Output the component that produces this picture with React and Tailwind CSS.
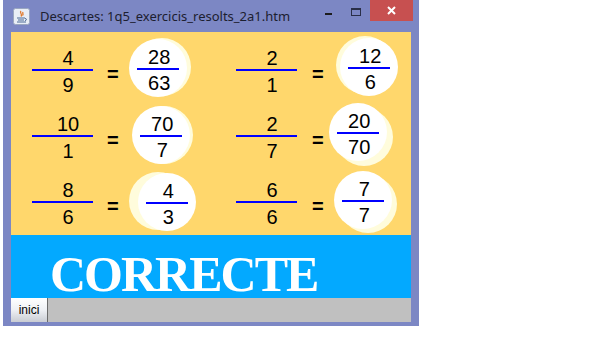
import React from 'react';

const rows = [
  [
    {
      num: '4', den: '9', a: '28', b: '63',
      frac: 'ml-[21px]', eq: 'ml-[14px]',
      circle: 'ml-[10px] mb-[6px] shadow-[4px_-1px_0_0_#fffcdc]',
    },
    {
      num: '2', den: '1', a: '12', b: '6',
      frac: 'ml-[25px]', eq: 'ml-[15px]',
      circle: 'ml-[16px] mb-[8px] shadow-[-4px_-2px_0_0_#fffcdc]',
    },
  ],
  [
    {
      num: '10', den: '1', a: '70', b: '7',
      frac: 'ml-[21px]', eq: 'ml-[14px]',
      circle: 'ml-[13px] mb-[4px] shadow-[3px_0_0_0_#fffcdc]',
    },
    {
      num: '2', den: '7', a: '20', b: '70',
      frac: 'ml-[25px]', eq: 'ml-[15px]',
      circle: 'ml-[5px] mb-[10px] shadow-[6px_5px_0_0_#fffcdc]',
    },
  ],
  [
    {
      num: '8', den: '6', a: '4', b: '3',
      frac: 'ml-[21px]', eq: 'ml-[14px]',
      circle: 'ml-[19px] mb-[2px] shadow-[-9px_-1px_0_0_#fffcdc]',
    },
    {
      num: '6', den: '6', a: '7', b: '7',
      frac: 'ml-[25px]', eq: 'ml-[15px]',
      circle: 'ml-[10px] mb-[6px] shadow-[5px_4px_0_0_#fffcdc]',
    },
  ],
];

const num = "font-['Liberation_Sans',Arial,sans-serif] text-[20px] leading-[22px] text-black";

function Fraction({ top, bottom, className }) {
  return (
    <div className={`flex flex-col w-[61px] ${className}`}>
      <div className={`${num} h-[22px] text-center pl-[11px]`}>{top}</div>
      <div className="h-[2px] bg-[#0000ff]" />
      <div className={`${num} h-[22px] mt-[3px] text-center pl-[11px]`}>{bottom}</div>
    </div>
  );
}

function Cell({ c }) {
  return (
    <div className="flex items-center w-[200px] h-[66px]">
      <Fraction top={c.num} bottom={c.den} className={c.frac} />
      <div className={`${num} font-bold mt-[6px] ${c.eq}`}>=</div>
      <div
        className={`w-[58px] h-[58px] shrink-0 rounded-full bg-white flex flex-col items-center justify-center ${c.circle}`}
      >
        <div className="flex flex-col w-[42px] mt-[3px]">
          <div className={`${num} h-[22px] text-center pl-[3px]`}>{c.a}</div>
          <div className="h-[2px] bg-[#0000ff]" />
          <div className={`${num} h-[22px] mt-[2px] text-center pl-[3px]`}>{c.b}</div>
        </div>
      </div>
    </div>
  );
}

function JavaIcon() {
  return (
    <svg width="17" height="17" viewBox="0 0 17 17">
      <rect x="0.5" y="0.5" width="16" height="16" rx="2" fill="#e9eef6" stroke="#9aa6c0" />
      <path d="M8 3 C6 5 10 6 8 8.5 M10 4 C9 5.5 11 6 9.5 7.5" stroke="#e0782a" strokeWidth="1.3" fill="none" />
      <path d="M4 10 H12 M5 12 H11 M4 14 H13" stroke="#4d6a96" strokeWidth="1.1" />
      <path d="M12 10.5 C14 10.5 14 12.5 12 12.5" stroke="#4d6a96" strokeWidth="1" fill="none" />
    </svg>
  );
}

export default function App() {
  return (
    <div className="w-[605px] h-[342px] bg-white flex items-start overflow-hidden">
      <div className="w-[3px] shrink-0" />
      <div className="w-[416px] h-[326px] shrink-0 bg-[#7c87c4] flex flex-col">
        {/* title bar */}
        <div className="h-[32px] flex items-start">
          <div className="ml-[10px] mt-[8px]">
            <JavaIcon />
          </div>
          <div className="ml-[10px] mt-[7px] font-['Noto_Sans',sans-serif] text-[13px] leading-[18px] text-[#1c2030] whitespace-nowrap">
            Descartes: 1q5_exercicis_resolts_2a1.htm
          </div>
          <div className="ml-auto flex items-start">
            <div className="w-[7px] h-[2px] bg-[#1c1c1c] mt-[13px]" />
            <div className="w-[10px] h-[8px] border border-t-2 border-[#2a2f48] mt-[8px] ml-[19px]" />
            <div className="w-[43px] h-[21px] bg-[#c75050] ml-[9px] mr-[6px] flex items-center justify-center">
              <svg width="9" height="9" viewBox="0 0 9 9">
                <path d="M1 1 L8 8 M8 1 L1 8" stroke="white" strokeWidth="2" />
              </svg>
            </div>
          </div>
        </div>
        {/* content */}
        <div className="mx-[8px] w-[400px] flex flex-col">
          <div className="h-[203px] bg-[#ffd76c] pt-[6px] flex flex-col overflow-hidden">
            {rows.map((r, i) => (
              <div key={i} className="flex h-[66px] shrink-0">
                {r.map((c, j) => (
                  <Cell key={j} c={c} />
                ))}
              </div>
            ))}
          </div>
          <div className="h-[63px] bg-[#03a9ff] flex items-start">
            <div className="ml-[39px] mt-[15px] font-['Liberation_Serif','Courier_New',serif] font-bold text-[50px] leading-[48px] tracking-[-2px] text-white">
              CORRECTE
            </div>
          </div>
          <div className="h-[24px] bg-[#c0c0c0] flex">
            <button className="w-[37px] h-[24px] bg-gradient-to-b from-white via-[#eef0f4] to-[#c9ccd3] border-r border-[#6b6b6b] font-['Liberation_Sans',Arial,sans-serif] text-[12px] text-black">
              inici
            </button>
          </div>
        </div>
      </div>
    </div>
  );
}
